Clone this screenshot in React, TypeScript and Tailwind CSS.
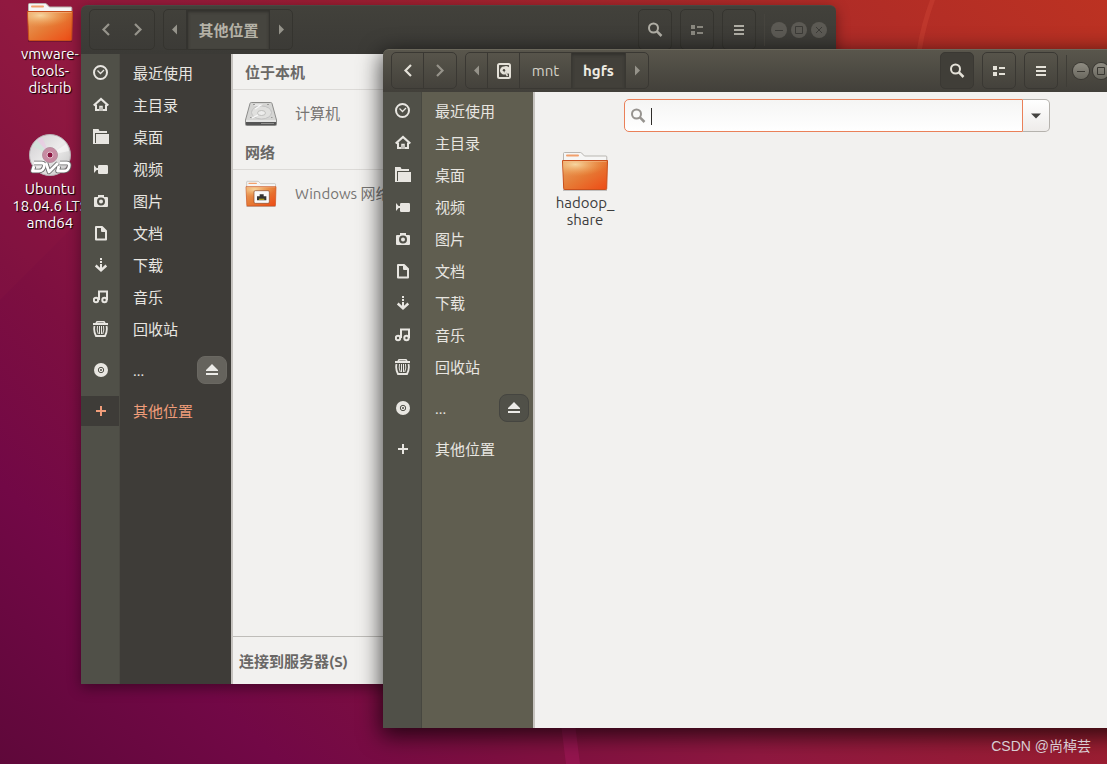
import { useId, type ReactNode } from "react";
import clsx from "clsx";

type PlaceId =
  | "recent"
  | "home"
  | "desktop"
  | "videos"
  | "pictures"
  | "documents"
  | "downloads"
  | "music"
  | "trash"
  | "disc"
  | "other";

type Place = { id: PlaceId; label: string };

const PLACES: Place[] = [
  { id: "recent", label: "最近使用" },
  { id: "home", label: "主目录" },
  { id: "desktop", label: "桌面" },
  { id: "videos", label: "视频" },
  { id: "pictures", label: "图片" },
  { id: "documents", label: "文档" },
  { id: "downloads", label: "下载" },
  { id: "music", label: "音乐" },
  { id: "trash", label: "回收站" },
];

const PLACE_GLYPHS: Record<PlaceId, ReactNode> = {
  recent: (
    <g fill="none" stroke="currentColor">
      <circle cx="7.5" cy="7.5" r="6.5" strokeWidth="2" />
      <path d="M4.5 5.5L7.5 8.5L11 5" strokeWidth="1.3" />
    </g>
  ),
  home: (
    <g fill="none" stroke="currentColor">
      <path d="M.7 8.500L8 2L15.300 8.500" strokeWidth="2.200" />
      <path d="M3 7.500V13H6M10 13H13V7.500" strokeWidth="2" />
      <path d="M7 14V9.500H9V14" strokeWidth="1.500" />
    </g>
  ),
  desktop: (
    <g fill="currentColor">
      <path d="M0 0h5.500l1 2H14v2H2v11H0z" />
      <path d="M3 5h13v10H2v-1h1z" />
    </g>
  ),
  videos: (
    <g fill="currentColor">
      <path d="M1 4l3.500 4L1 12z" />
      <rect height="9" rx="1.200" width="10" x="5" y="4" />
      <path d="M3 7h3v2H3z" />
    </g>
  ),
  pictures: (
    <path
      d="M5 2h6v2h3q1 0 1 1v8q0 1-1 1H2q-1 0-1-1V5q0-1 1-1h3zM8 4.500a4 4 0 1 0 0 8 4 4 0 0 0 0-8zm0 2a2 2 0 1 1 0 4 2 2 0 0 1 0-4z"
      fill="currentColor"
      fillRule="evenodd"
    />
  ),
  documents: (
    <path d="M3 2h6L13 6V14.500H3zM9 2V6H13" fill="none" stroke="currentColor" strokeWidth="2" strokeLinejoin="round" />
  ),
  downloads: (
    <g fill="none" stroke="currentColor" strokeWidth="2">
      <path d="M8 1v2M8 4v2M8 7v5" />
      <path d="M2.700 8.500L8 13.300L13.300 8.500" strokeWidth="2.400" />
    </g>
  ),
  music: (
    <g fill="none" stroke="currentColor" strokeWidth="2">
      <circle cx="3" cy="11" r="2.200" />
      <circle cx="11.500" cy="11" r="2.200" />
      <path d="M6 11V2.500H14V11" />
    </g>
  ),
  trash: (
    <g fill="none" stroke="currentColor">
      <path d="M3 2.500L4 .8h7l1 1.700" strokeWidth="1.500" />
      <path d="M0 3h15" strokeWidth="2" />
      <path d="M1.500 5Q.3 10 3 15h9q2.700-5 1.500-10" strokeWidth="1.800" />
      <path d="M4.500 5q-1 4 .8 8M6.500 5v8M8.500 5v8M10.500 5q1 4-.8 8" strokeWidth="1" />
    </g>
  ),
  disc: (
    <g>
      <circle cx="8" cy="8" r="7" fill="currentColor" />
      <circle cx="8" cy="8" r="2.700" fill="none" stroke="#505048" />
      <circle cx="8" cy="8" r="1" fill="#505048" />
    </g>
  ),
  other: <path d="M8 3v10M3 8h10" fill="none" stroke="currentColor" strokeWidth="2" />,
};

function PlaceIcon({ id }: { id: PlaceId }) {
  return (
    <svg aria-hidden className="size-4 shrink-0" viewBox="0 0 16 16">
      {PLACE_GLYPHS[id]}
    </svg>
  );
}

function SearchIcon({ className }: { className?: string }) {
  return (
    <svg aria-hidden className={clsx("size-4 shrink-0", className)} fill="none" stroke="currentColor" viewBox="0 0 16 16">
      <circle cx="6.500" cy="6" r="4.500" strokeWidth="2" />
      <path d="M9.700 9.200L14.500 14" strokeWidth="2.500" />
    </svg>
  );
}

function ViewIcon() {
  return (
    <svg aria-hidden className="size-4" fill="currentColor" viewBox="0 0 16 16">
      <path d="M2 3h4v4H2zM2 9h4v4H2zM8 4h6v2H8zM8 10h6v2H8z" />
    </svg>
  );
}

function MenuIcon() {
  return (
    <svg aria-hidden className="size-4" fill="currentColor" viewBox="0 0 16 16">
      <path d="M3 3h10v2H3zM3 7h10v2H3zM3 11h10v2H3z" />
    </svg>
  );
}

function ChevronIcon({ flip = false }: { flip?: boolean }) {
  return (
    <svg aria-hidden className="size-4" fill="none" stroke="currentColor" strokeWidth="2.200" viewBox="0 0 16 16">
      <path d={flip ? "M5 2L10.500 7.500L5 13" : "M11 2L5.500 7.500L11 13"} />
    </svg>
  );
}

function TriangleIcon({ flip = false }: { flip?: boolean }) {
  return (
    <svg aria-hidden className="size-4" fill="currentColor" viewBox="0 0 16 16">
      <path d={flip ? "M6 2.500l5 5-5 5z" : "M10 2.500L5 7.500l5 5z"} />
    </svg>
  );
}

function DriveIcon() {
  return (
    <svg aria-hidden className="size-4" viewBox="0 0 16 16">
      <rect fill="none" height="14" rx="1.500" stroke="currentColor" strokeWidth="2" width="12" x="2" y="1" />
      <path d="M8 3.500a4 4 0 1 0 1.500 7.700L8 8l4 3a4 4 0 0 0-4-7.500z" fill="currentColor" />
      <circle cx="8" cy="7.300" fill="#4a4840" r="1.200" />
      <path d="M9 9l2.500 4" stroke="currentColor" strokeWidth="1.500" />
    </svg>
  );
}

function FolderIcon({ network = false, className }: { network?: boolean; className?: string }) {
  const id = useId();

  return (
    <svg aria-hidden className={clsx("shrink-0", className)} viewBox="0 0 48 41">
      <defs>
        <linearGradient id={`${id}-body`} x1="0" x2="1" y1="0" y2="1">
          <stop offset="0" stopColor="#e8a566" />
          <stop offset=".5" stopColor="#e67a35" />
          <stop offset="1" stopColor="#ee4a14" />
        </linearGradient>
        <radialGradient cx=".28" cy=".2" id={`${id}-glow`} r=".7">
          <stop offset="0" stopColor="#f7d9a4" stopOpacity=".95" />
          <stop offset="1" stopColor="#f0a050" stopOpacity="0" />
        </radialGradient>
      </defs>
      <path d="M2.500 14V2.500q0-1 1-1h16q1 0 2 1.500l2 2H45q.8 0 .8 1V14z" fill="#f6f6f5" stroke="#b9b6b1" />
      <rect fill="#f2a06c" height="2" rx="1" width="13" x="5" y="3.500" />
      <rect fill="#000" height="2" opacity=".2" width="44" x="2" y="38" />
      <path d="M1.500 9.500h45l-.8 28q0 1-1 1h-41q-1 0-1-1z" fill={`url(#${id}-body)`} stroke="#c8501c" />
      <path d="M2 10h44l-.4 9Q30 25 2.300 27z" fill={`url(#${id}-glow)`} />
      <path d="M2.500 10.500h43" opacity=".5" stroke="#f7c090" />
      {network ? (
        <g>
          <rect fill="#fafafa" height="19" rx="2" stroke="#8a4a2a" width="23" x="13.500" y="15.500" />
          <path d="M18 30v-6h4v-3h6v3h4v6z" fill="#333" />
          <path d="M21 28.500h8" stroke="#a89a20" strokeWidth="2" />
        </g>
      ) : null}
    </svg>
  );
}

function HardDiskIcon() {
  return (
    <svg aria-hidden className="size-8 shrink-0" viewBox="0 0 32 32">
      <path d="M5 5.500q.3-1 1.300-1h19.400q1 0 1.300 1L31.500 22v4.500q0 1-1 1h-29q-1 0-1-1V22z" fill="#d5d5d3" stroke="#8c8c8a" />
      <path d="M1 24h30v2.500q0 .5-.5.5h-29q-.5 0-.5-.5z" fill="#555" />
      <path d="M1 23h30" stroke="#f4f4f4" />
      <path d="M16 25.500h13" stroke="#8e8e8c" />
      <ellipse cx="16.500" cy="14.500" fill="#e0e0de" rx="10" ry="6.500" stroke="#bbb" strokeWidth=".8" />
      <ellipse cx="16.500" cy="15" fill="#ececeb" rx="4" ry="2.500" stroke="#b5b5b3" strokeWidth=".8" />
      <path d="M9 7h7l-6 4M7 20l6-3" fill="none" stroke="#f8f8f8" strokeWidth="1.200" />
      <path d="M8 6.500h2M22 6.500h2M5 19.500h1.500M26 19.500h1.500" stroke="#9a9a98" />
    </svg>
  );
}

function DvdIcon() {
  const id = useId();

  return (
    <svg aria-hidden className="h-[42px] w-11" viewBox="0 0 44 42">
      <defs>
        <linearGradient id={id} x1="0" x2="1" y1="0" y2="1">
          <stop offset="0" stopColor="#cfcccf" />
          <stop offset=".5" stopColor="#ecebeb" />
          <stop offset="1" stopColor="#c4c4c4" />
        </linearGradient>
      </defs>
      <circle cx="22" cy="21" fill={`url(#${id})`} r="20.500" stroke="#b9b3b6" />
      <path d="M22 21L4.500 12A20 20 0 0 1 9 6z" fill="#cfe6da" opacity=".7" />
      <path d="M22 21L9 6a20 20 0 0 1 5-3z" fill="#e9c9e4" opacity=".7" />
      <path d="M22 21L38 10a20 20 0 0 1 3 7z" fill="#fff" opacity=".5" />
      <circle cx="22" cy="21" fill="#c78aa2" r="7.500" stroke="#b890a0" />
      <circle cx="22" cy="21" fill="#8a1541" r="3" stroke="#e2c4ce" />
      <g fill="none" strokeLinejoin="round">
        <g stroke="#666" strokeWidth="4.500">
          <path d="M6 29h8q3 0 2 4t-5 4H4.500L6 32" />
          <path d="M18 29l3 9 9-9" />
          <path d="M32 29h7q3 0 2 4t-5 4h-6.500l1.500-5" />
        </g>
        <g stroke="#fff" strokeWidth="2.800">
          <path d="M6 29h8q3 0 2 4t-5 4H4.500L6 32" />
          <path d="M18 29l3 9 9-9" />
          <path d="M32 29h7q3 0 2 4t-5 4h-6.500l1.500-5" />
        </g>
      </g>
    </svg>
  );
}

function Wallpaper() {
  return (
    <svg aria-hidden className="absolute inset-0 size-full" preserveAspectRatio="none" viewBox="0 0 1107 764">
      <path d="M0 0H300L0 300z" fill="#a02040" opacity=".12" />
      <path d="M930 0h5q-9 24-13 49h-5q4-25 13-49z" fill="#d04538" opacity=".4" />
      <path d="M558 700h14l8 64h-14z" fill="#a01858" opacity=".6" />
    </svg>
  );
}

function WindowControls({ active }: { active: boolean }) {
  const button = clsx(
    "flex size-4 items-center justify-center rounded-full",
    active ? "bg-linear-to-b from-[#8f8c82] to-[#6a685f] text-[#3a3832] ring-1 ring-[#3a3833]" : "bg-[#5c5a54] text-[#3c3b37]",
  );

  return (
    <div className="ml-1.5 flex gap-1">
      {[
        { label: "最小化", d: "M4 8.500h8" },
        { label: "最大化", d: "M4.500 4.500h7v7h-7z" },
        { label: "关闭", d: "M5 5l6 6M11 5l-6 6" },
      ].map((control) => (
        <button aria-label={control.label} className={button} key={control.label} type="button">
          <svg aria-hidden className="size-4" fill="none" stroke="currentColor" viewBox="0 0 16 16">
            <path d={control.d} />
          </svg>
        </button>
      ))}
    </div>
  );
}

function HeaderBar({ active, children }: { active: boolean; children: ReactNode }) {
  const tool = clsx(
    "flex w-[34px] items-center justify-center rounded-[5px] border",
    active ? "border-[#3a3833] text-[#e4e1d8]" : "border-[#35342f]",
  );

  return (
    <header
      className={clsx(
        "flex shrink-0 items-stretch gap-2 rounded-t-md pr-[9px] pl-2",
        active
          ? "h-[43px] border-t border-[#6b685c] bg-linear-to-b from-[#59564c] to-[#42403a] pt-0.5 pb-[3px]"
          : "h-[49px] border-t border-[#4a4842] bg-linear-to-b from-[#42413b] to-[#3b3a36] pt-[3px] pb-1",
      )}
    >
      {children}
      <div className="ml-auto flex items-stretch gap-2">
        <button aria-label="搜索" className={clsx(tool, active ? "bg-[#403e38]" : "text-[#b0aea5]")} type="button">
          <SearchIcon />
        </button>
        <button aria-label="视图" className={clsx(tool, !active && "text-[#8a887f]")} type="button">
          <ViewIcon />
        </button>
        <button aria-label="菜单" className={clsx(tool, !active && "text-[#b0aea5]")} type="button">
          <MenuIcon />
        </button>
        <div className="flex items-center">
          <span className={clsx("h-8 w-px", active ? "bg-[#3f3d37]" : "bg-[#46443e]")} />
          <WindowControls active={active} />
        </div>
      </div>
    </header>
  );
}

function HistoryButtons({ active }: { active: boolean }) {
  return (
    <div
      className={clsx(
        "flex w-[66px] rounded-[5px] border",
        active ? "divide-x divide-[#3a3833] border-[#3a3833]" : "border-[#35342f] text-[#96948b]",
      )}
    >
      <button aria-label="后退" className={clsx("flex w-8 items-center justify-center", active && "text-[#e4e1d8]")} type="button">
        <ChevronIcon />
      </button>
      <button aria-label="前进" className={clsx("flex w-8 items-center justify-center", active && "text-[#96938a]")} type="button">
        <ChevronIcon flip />
      </button>
    </div>
  );
}

function Sidebar({ active, selected }: { active: boolean; selected?: PlaceId }) {
  const row = (place: Place) => (
    <a
      className={clsx("flex h-[30px] items-center", place.id === selected ? "text-[#f09d7a]" : "text-[#e8e6e1]")}
      href={`#${place.id}`}
    >
      <span
        className={clsx(
          "flex h-full w-[39px] shrink-0 items-center border-r pl-3",
          active ? "border-[#474740]" : "border-[#4b4a43]",
          place.id === selected ? "bg-[#3e3c38]" : "bg-[#505048]",
        )}
      >
        <PlaceIcon id={place.id} />
      </span>
      <span className="pt-0.5 pl-[13px]">{place.label}</span>
    </a>
  );

  return (
    <nav
      className={clsx(
        "relative w-[152px] shrink-0 border-r-2 border-[#c6c3bf]",
        active ? "bg-[#605e50]" : "bg-[#3e3c38]",
      )}
    >
      <div className={clsx("absolute inset-y-0 left-0 w-[39px] border-r bg-[#505048]", active ? "border-[#474740]" : "border-[#4b4a43]")} />
      <ul className="relative flex flex-col gap-0.5 pt-1">
        {PLACES.map((place) => (
          <li key={place.id}>{row(place)}</li>
        ))}
        <li className="my-[9px] flex items-center justify-between pr-1">
          {row({ id: "disc", label: "..." })}
          <button
            aria-label="弹出"
            className={clsx(
              "flex h-7 w-[30px] items-center justify-center rounded-lg border text-[#ecebe8]",
              active ? "border-[#454540] bg-[#505048]" : "border-[#6a6862] bg-[#65635d]",
            )}
            type="button"
          >
            <svg aria-hidden className="size-4" fill="currentColor" viewBox="0 0 16 16">
              <path d="M8 2l6 6v1H2V8zM2 11h12v2H2z" />
            </svg>
          </button>
        </li>
        <li>{row({ id: "other", label: "其他位置" })}</li>
      </ul>
    </nav>
  );
}

function OtherLocationsWindow() {
  return (
    <section className="absolute top-[5px] bottom-20 left-[81px] flex w-[755px] flex-col rounded-t-md shadow-[0_4px_14px_rgba(0,0,0,0.4)]">
      <HeaderBar active={false}>
        <HistoryButtons active={false} />
        <div className="flex rounded-[5px] border border-[#35342f] text-[#96948b]">
          <button aria-label="上一级路径" className="flex w-[22px] items-center justify-center" type="button">
            <TriangleIcon />
          </button>
          <button
            className="w-[84px] border-r border-l-2 border-[#34332f] bg-[#46453f] pt-0.5 font-bold text-[#b5b2a7] shadow-[inset_0_2px_3px_#32312d]"
            type="button"
          >
            其他位置
          </button>
          <button aria-label="下一级路径" className="flex w-[22px] items-center justify-center" type="button">
            <TriangleIcon flip />
          </button>
        </div>
      </HeaderBar>
      <div className="flex min-h-0 flex-1 bg-[#f2f1ef]">
        <Sidebar active={false} selected="other" />
        <main className="flex min-w-0 flex-1 flex-col text-[#777573]">
          <h2 className="flex h-9 items-center border-b border-[#dcdad7] px-3 pt-0.5 font-bold text-[#6a6866]">位于本机</h2>
          <a className="flex h-11 items-center gap-[18px] px-3 pt-1" href="#computer">
            <HardDiskIcon />
            计算机
          </a>
          <h2 className="flex h-9 items-center border-b border-[#dcdad7] px-3 pt-0.5 font-bold text-[#6a6866]">网络</h2>
          <a className="flex h-11 items-center gap-[18px] px-3 pt-1" href="#network">
            <FolderIcon className="h-7 w-8" network />
            Windows 网络
          </a>
          <footer className="mt-auto flex h-12 items-center border-t border-[#bfbdb9] px-1.5 pt-0.5 font-bold text-[#6a6866]">
            连接到服务器(S)
          </footer>
        </main>
      </div>
    </section>
  );
}

function FolderWindow() {
  return (
    <section className="absolute top-[49px] bottom-9 left-[383px] flex w-[755px] flex-col rounded-t-md shadow-[0_6px_22px_2px_rgba(0,0,0,0.7)]">
      <HeaderBar active>
        <HistoryButtons active />
        <div className="flex divide-x divide-[#3a3833] rounded-[5px] border border-[#3a3833] text-[#96938a]">
          <button aria-label="上一级路径" className="flex w-[22px] items-center justify-center" type="button">
            <TriangleIcon />
          </button>
          <button aria-label="计算机" className="flex w-8 items-center justify-center text-[#e4e1d8]" type="button">
            <DriveIcon />
          </button>
          <button className="w-[52px] text-[#d5d2c8]" type="button">
            mnt
          </button>
          <button className="w-[54px] bg-[#42403a] font-bold text-[#eeebe2] shadow-[inset_0_2px_3px_#32312d]" type="button">
            hgfs
          </button>
          <button aria-label="下一级路径" className="flex w-[22px] items-center justify-center" type="button">
            <TriangleIcon flip />
          </button>
        </div>
      </HeaderBar>
      <div className="flex min-h-0 flex-1 bg-[#f2f1ef]">
        <Sidebar active />
        <main className="flex min-w-0 flex-1 flex-col">
          <form className="mx-auto mt-[7px] flex h-[33px] w-[426px]" role="search">
            <label className="flex flex-1 items-center rounded-l-[5px] border border-[#ea8058] bg-linear-to-b from-[#f5f5f4] to-white pl-[5px]">
              <SearchIcon className="text-[#96938f]" />
              <span aria-hidden className="mt-0.5 ml-[5px] h-[17px] w-px bg-[#2f2d2a]" />
              <input aria-label="搜索文件" className="min-w-0 flex-1 bg-transparent caret-transparent outline-none" type="text" />
            </label>
            <button
              aria-label="搜索选项"
              className="flex w-[27px] items-center justify-center rounded-r-[5px] border border-l-0 border-[#b5b2ad] bg-linear-to-b from-white to-[#eeecea] text-[#444340]"
              type="button"
            >
              <svg aria-hidden className="size-4" fill="currentColor" viewBox="0 0 16 16">
                <path d="M3 5.500h10L8 10.500z" />
              </svg>
            </button>
          </form>
          <a className="mt-[19px] flex w-[100px] flex-col items-center text-center leading-[17px] text-[#3d3d3d]" href="#hadoop_share">
            <FolderIcon className="h-[41px] w-12" />
            <span className="pt-0.5">
              hadoop_
              <br />
              share
            </span>
          </a>
        </main>
      </div>
    </section>
  );
}

export default function App() {
  return (
    <div className="relative h-screen overflow-hidden bg-[linear-gradient(45deg,#5f083a_0%,#720846_15%,#7d0f40_27%,#901840_41%,#9a1d33_58%,#aa2929_78%,#bc3222_100%)] font-['Ubuntu','Noto_Sans','Noto_Sans_CJK_SC',sans-serif] text-[15px] leading-5">
      <Wallpaper />
      <div className="absolute top-0 left-0 w-[100px] text-center leading-[17px] text-white [text-shadow:1px_1px_1px_#000]">
        <a className="flex flex-col items-center pt-0.5" href="#vmware-tools-distrib">
          <FolderIcon className="h-[41px] w-12" />
          <span className="pt-0.5">
            vmware-
            <br />
            tools-
            <br />
            distrib
          </span>
        </a>
        <a className="mt-[38px] flex flex-col items-center" href="#dvd">
          <DvdIcon />
          <span className="pt-1 whitespace-nowrap">
            Ubuntu
            <br />
            18.04.6 LTS
            <br />
            amd64
          </span>
        </a>
      </div>
      <OtherLocationsWindow />
      <FolderWindow />
      <p className="absolute right-4 bottom-2 font-['Liberation_Sans','Noto_Sans_CJK_SC',sans-serif] text-sm text-[#d9ccd2]">
        CSDN @尚棹芸
      </p>
    </div>
  );
}
